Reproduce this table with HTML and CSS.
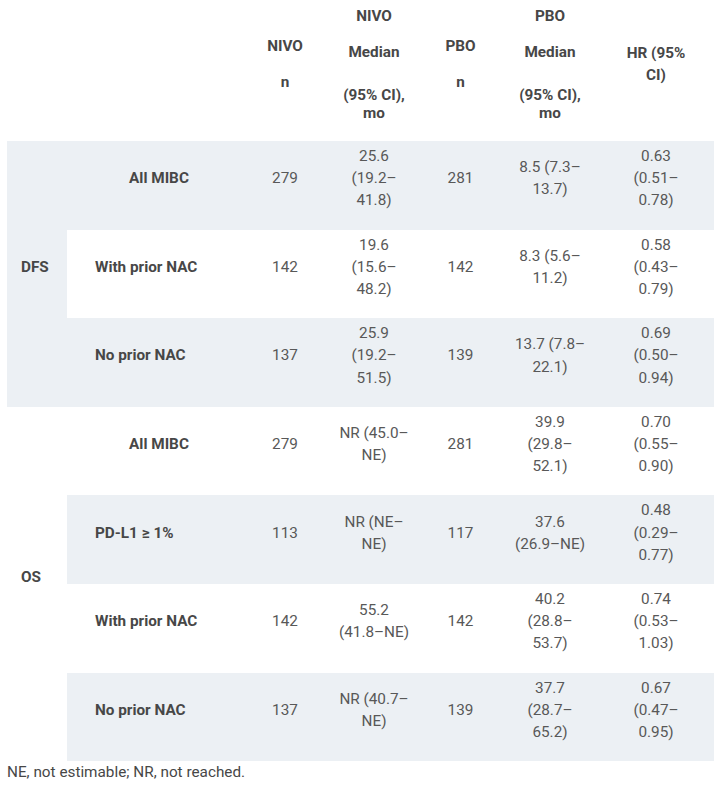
FILE: index.html
```html
<!DOCTYPE html>
<html lang="en">
<head>
<meta charset="utf-8">
<title>Results</title>
<link rel="stylesheet" href="styles.css">
</head>
<body>
<table class="results">
  <colgroup>
    <col class="col-group">
    <col class="col-sub">
    <col class="col-n">
    <col class="col-med">
    <col class="col-pn">
    <col class="col-pmed">
    <col class="col-hr">
  </colgroup>
  <thead>
    <tr>
      <th></th>
      <th></th>
      <th><p class="w">NIVO</p><p class="w">n</p></th>
      <th><p class="w">NIVO</p><p class="w">Median</p><p class="w tight">(95% CI), mo</p></th>
      <th><p class="w">PBO</p><p class="w">n</p></th>
      <th><p class="w">PBO</p><p class="w">Median</p><p class="w tight">(95% CI), mo</p></th>
      <th><p class="w">HR (95% CI)</p></th>
    </tr>
  </thead>
  <tbody>
    <tr>
      <td class="group" rowspan="3"><p>DFS</p></td>
      <td class="label all"><p>All MIBC</p></td>
      <td><p class="w">279</p></td>
      <td><p class="w">25.6 (19.2–41.8)</p></td>
      <td><p class="w">281</p></td>
      <td><p class="w">8.5 (7.3–13.7)</p></td>
      <td><p class="w">0.63 (0.51–0.78)</p></td>
    </tr>
    <tr>
      <td class="label"><p>With prior NAC</p></td>
      <td><p class="w">142</p></td>
      <td><p class="w">19.6 (15.6–48.2)</p></td>
      <td><p class="w">142</p></td>
      <td><p class="w">8.3 (5.6–11.2)</p></td>
      <td><p class="w">0.58 (0.43–0.79)</p></td>
    </tr>
    <tr>
      <td class="label"><p>No prior NAC</p></td>
      <td><p class="w">137</p></td>
      <td><p class="w">25.9 (19.2–51.5)</p></td>
      <td><p class="w">139</p></td>
      <td><p class="w">13.7 (7.8–22.1)</p></td>
      <td><p class="w">0.69 (0.50–0.94)</p></td>
    </tr>
    <tr>
      <td class="group" rowspan="4"><p>OS</p></td>
      <td class="label all"><p>All MIBC</p></td>
      <td><p class="w">279</p></td>
      <td><p class="w">NR (45.0–NE)</p></td>
      <td><p class="w">281</p></td>
      <td><p class="w">39.9 (29.8–52.1)</p></td>
      <td><p class="w">0.70 (0.55–0.90)</p></td>
    </tr>
    <tr>
      <td class="label"><p>PD-L1 ≥ 1%</p></td>
      <td><p class="w">113</p></td>
      <td><p class="w">NR (NE–NE)</p></td>
      <td><p class="w">117</p></td>
      <td><p class="w">37.6 (26.9–NE)</p></td>
      <td><p class="w">0.48 (0.29–0.77)</p></td>
    </tr>
    <tr>
      <td class="label"><p>With prior NAC</p></td>
      <td><p class="w">142</p></td>
      <td><p class="w">55.2 (41.8–NE)</p></td>
      <td><p class="w">142</p></td>
      <td><p class="w">40.2 (28.8–53.7)</p></td>
      <td><p class="w">0.74 (0.53–1.03)</p></td>
    </tr>
    <tr>
      <td class="label"><p>No prior NAC</p></td>
      <td><p class="w">137</p></td>
      <td><p class="w">NR (40.7–NE)</p></td>
      <td><p class="w">139</p></td>
      <td><p class="w">37.7 (28.7–65.2)</p></td>
      <td><p class="w">0.67 (0.47–0.95)</p></td>
    </tr>
  </tbody>
</table>
<p class="footnote">NE, not estimable; NR, not reached.</p>
</body>
</html>
```

FILE: styles.css
```css
html, body {
  background: #ffffff;
}
body {
  margin: 0 6px 0 7px;
  font-family: Roboto, "Liberation Sans", Arial, sans-serif;
  font-size: 15.3px;
  line-height: 22.2px;
  color: #585858;
}
.results {
  width: 707px;
  table-layout: fixed;
  border-collapse: collapse;
  border-spacing: 0;
}
.col-group { width: 60px; }
.col-sub { width: 174px; }
.col-n { width: 88px; }
.col-med { width: 90px; }
.col-pn { width: 83px; }
.col-pmed { width: 96px; }
.col-hr { width: 116px; }

.results p {
  margin: 0 0 14px 0;
}
.results th {
  padding: 5px 4px 5px 4px;
  font-weight: 700;
  color: #474747;
  text-align: center;
  vertical-align: middle;
  line-height: 22px;
}
.results th .w {
  max-width: 81px;
  margin-left: auto;
  margin-right: auto;
}
.results th .tight {
  line-height: 18px;
  margin-top: 23px;
}
.results td {
  padding: 4px;
  text-align: center;
  vertical-align: middle;
}
.results td .w {
  max-width: 74px;
  margin-left: auto;
  margin-right: auto;
}
.results tbody tr:nth-child(odd) {
  background: #ecf0f4;
}
.results td.group {
  text-align: left;
  padding-left: 14px;
  font-weight: 700;
  color: #474747;
}
.results td.label {
  text-align: left;
  padding-left: 28px;
  font-weight: 700;
  color: #474747;
}
.results td.label.all {
  text-align: center;
  padding-left: 14px;
  padding-right: 4px;
}
.footnote {
  margin: 0;
  color: #474747;
  line-height: 22px;
}
```
